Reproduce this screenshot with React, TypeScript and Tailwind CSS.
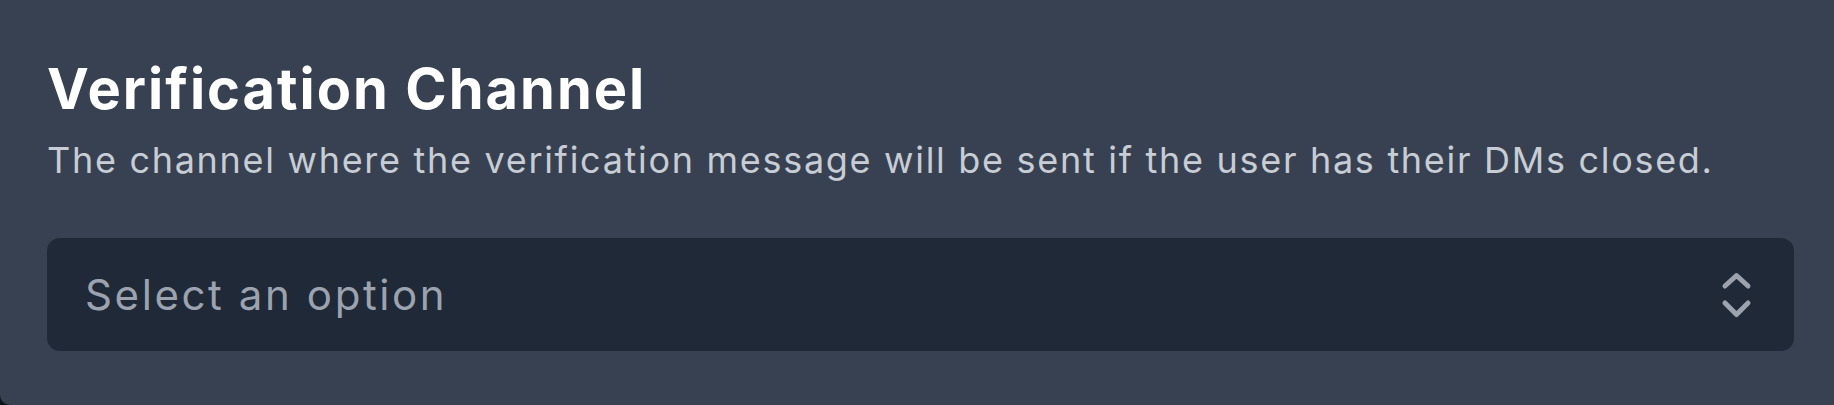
import React from "react";

export default function App() {
  return (
    <div className="w-[1834px] h-[405px] bg-[#0f131a]" style={{ fontFamily: "Inter, 'Noto Sans', sans-serif" }}>
      <div className="w-full h-full bg-[#374151] rounded-bl-[10px] pt-[55px] pl-[47px] pr-[40px] flex flex-col">
        <div className="text-[56px] leading-[68px] font-bold text-white tracking-[2px] whitespace-nowrap">
          Verification Channel
        </div>
        <div className="mt-[15px] text-[36px] leading-[44px] text-[#c8ccd4] tracking-[1.7px] whitespace-nowrap">
          The channel where the verification message will be sent if the user has their DMs closed.
        </div>
        <div className="mt-[56px] h-[113px] rounded-[13px] bg-[#1f2937] flex items-center justify-between pl-[38px] pr-[41px]">
          <span className="text-[42px] leading-[50px] text-[#9ca3af] tracking-[2.6px]">Select an option</span>
          <svg width="33" height="50" viewBox="0 0 33 50" fill="none" stroke="#9ca3af" strokeWidth="5" strokeLinecap="round" strokeLinejoin="round">
            <path d="M5 16 L16.5 5.5 L28 16" />
            <path d="M5 33 L16.5 44.5 L28 33" />
          </svg>
        </div>
      </div>
    </div>
  );
}
